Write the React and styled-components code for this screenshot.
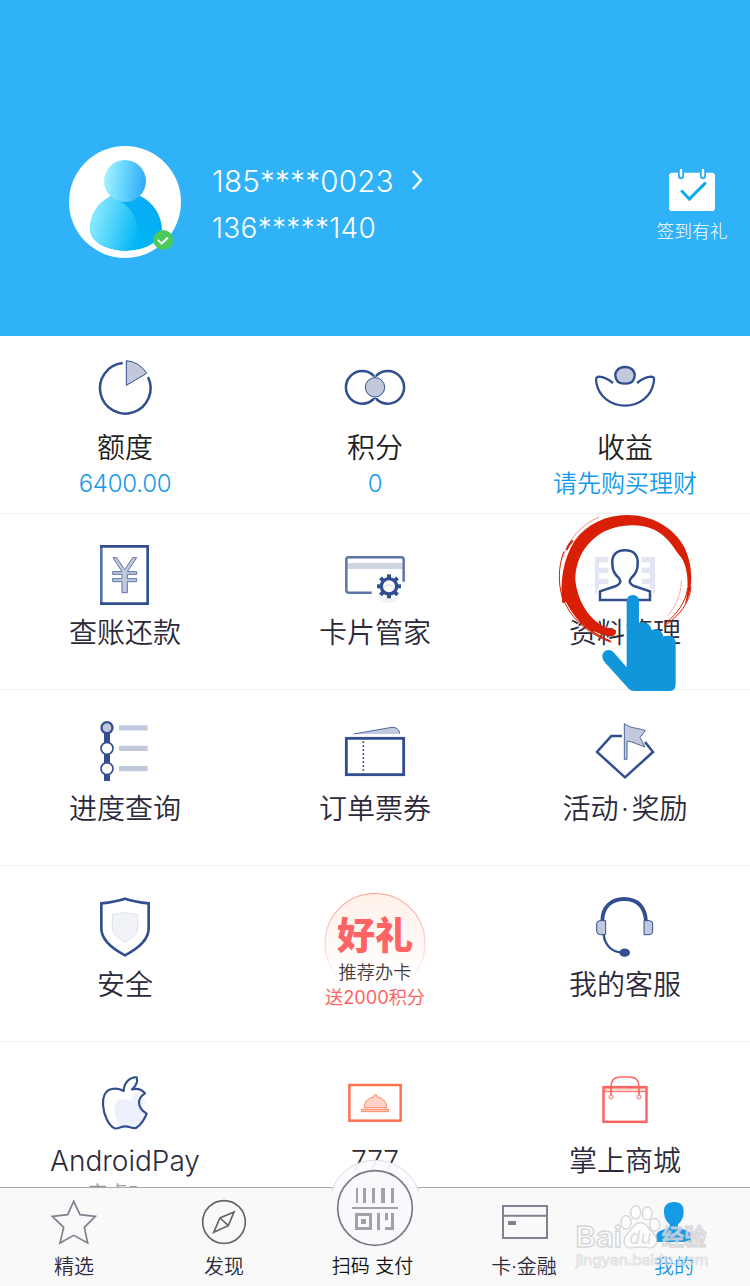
import React from 'react';
import styled, { createGlobalStyle } from 'styled-components';

const NAVY = '#314e8e';
const PALE = '#c3c9dd';
const RED = '#ff6464';
const GREY = '#7f7f8c';

const GlobalStyle = createGlobalStyle`
  * { box-sizing: border-box; }
  body {
    margin: 0;
    background: #fff;
    font-family: Inter, "Noto Sans CJK SC", sans-serif;
    font-weight: 350;
  }
`;

const Screen = styled.div`
  width: 750px;
  height: 1286px;
  display: flex;
  flex-direction: column;
  overflow: hidden;
  background: #fff;
`;

const Header = styled.header`
  height: 336px;
  flex: none;
  display: flex;
  align-items: flex-start;
  padding: 146px 20px 0 69px;
  background: #30b2f8;
  color: #fff;
  font-weight: 300;
`;

const Avatar = styled.svg`
  width: 112px;
  height: 112px;
  flex: none;
`;

const Account = styled.div`
  flex: 1;
  padding: 14px 0 0 31px;
`;

const Phone = styled.div`
  display: flex;
  align-items: center;
  height: ${(p) => (p.$main ? 42 : 40)}px;
  margin-top: ${(p) => (p.$main ? 0 : 6)}px;
  font-size: ${(p) => (p.$main ? 29.5 : 28)}px;
  letter-spacing: ${(p) => (p.$main ? 0.3 : 0.3)}px;
  white-space: nowrap;
`;

const Chevron = styled.svg`
  width: 14px;
  height: 24px;
  margin: -3px 0 0 16px;
`;

const SignIn = styled.div`
  width: 76px;
  padding-top: 20px;
  display: flex;
  flex-direction: column;
  align-items: center;
  font-size: 17.8px;
  line-height: 28px;
  white-space: nowrap;
`;

const CalendarIcon = styled.svg`
  width: 50px;
  height: 52px;
`;

const Content = styled.main`
  height: 851px;
  flex: none;
  overflow: hidden;
`;

const Row = styled.section`
  display: grid;
  grid-template-columns: repeat(3, 250px);
  height: ${(p) => p.$height || 176}px;
  border-bottom: 1px solid #f0f0f2;
`;

const Cell = styled.div`
  position: relative;
  display: flex;
  flex-direction: column;
  align-items: center;
  padding-top: ${(p) => (p.$stat ? 19 : 26)}px;
  color: ${(p) => (p.$stat ? '#1f1f22' : '#2c2a3a')};
`;

const Icon = styled.svg`
  width: 80px;
  height: 72px;
  flex: none;
  display: block;
  fill: none;
`;

const Title = styled.div`
  padding-top: 1px;
  font-size: 28px;
  line-height: 40px;
  white-space: nowrap;
`;

const Dot = styled.span`
  padding: 0 2.5px;
`;

const Value = styled.div`
  font-size: 24px;
  line-height: 32px;
  letter-spacing: ${(p) => (p.$numeric ? '-0.25px' : '0')};
  color: #149bea;
  white-space: nowrap;
`;

const Note = styled.div`
  font-size: 20px;
  line-height: 26px;
  color: #999;
`;

const Promo = styled.div`
  display: grid;
  justify-items: center;
  > * { grid-area: 1 / 1; }
`;

const PromoDisc = styled.svg`
  width: 104px;
  height: 104px;
`;

const PromoText = styled.div`
  display: flex;
  flex-direction: column;
  align-items: center;
  padding-top: 18px;
  white-space: nowrap;
`;

const PromoHead = styled.b`
  font-size: 38px;
  line-height: 50px;
  font-weight: 900;
  color: ${RED};
`;

const PromoLine = styled.span`
  font-size: 18.2px;
  line-height: 25px;
  font-weight: ${(p) => (p.$hot ? 400 : 350)};
  color: ${(p) => (p.$hot ? RED : '#4b3b3f')};
`;

const Pointer = styled.svg`
  position: absolute;
  left: 55px;
  top: -2px;
  width: 140px;
  height: 180px;
  fill: none;
`;

const TabBar = styled.nav`
  position: relative;
  flex: none;
  height: 99px;
  display: grid;
  grid-template-columns: repeat(5, 150px);
  border-top: 1px solid #a9a9ab;
  background: #f9f9f9;
`;

const Tab = styled.div`
  display: flex;
  flex-direction: column;
  align-items: center;
`;

const TabIcon = styled.svg`
  width: 90px;
  height: 65px;
  display: block;
  overflow: visible;
  fill: none;
`;

const TabLabel = styled.div`
  font-size: ${(p) => p.$size || 20}px;
  line-height: 28px;
  padding-right: ${(p) => p.$shift || 2}px;
  color: ${(p) => p.$color || '#2c2a3a'};
  white-space: nowrap;
`;

const Watermark = styled.svg`
  position: absolute;
  left: 570px;
  top: 12px;
  width: 146px;
  height: 75px;
`;

const UserAvatar = () => (
  <Avatar viewBox="57 48 336 336">
    <defs>
      <linearGradient id="head" x1="0" y1=".4" x2="1" y2=".5">
        <stop offset="0" stopColor="#a5f3ff" />
        <stop offset=".5" stopColor="#62d3fd" />
        <stop offset="1" stopColor="#31a8f8" />
      </linearGradient>
      <linearGradient id="bodyFront" x1="0" y1=".3" x2="1" y2=".6">
        <stop offset="0" stopColor="#93eeff" />
        <stop offset="1" stopColor="#06b7f6" />
      </linearGradient>
      <linearGradient id="bodyBack" x1="0" y1="1" x2="1" y2="0">
        <stop offset="0" stopColor="#00bdf8" />
        <stop offset="1" stopColor="#07a9f3" />
      </linearGradient>
    </defs>
    <circle cx="225" cy="216" r="168" fill="#fff" />
    <path d="M182 199C140 220 120 258 120 298C122 338 172 362 227 362C284 362 333 337 336 297C334 258 312 218 271 198Z" fill="url(#bodyBack)" />
    <path d="M182 199C140 220 120 258 120 298C122 338 172 362 227 362C245 362 258 358 263 340C275 290 250 230 205 212Z" fill="url(#bodyFront)" />
    <circle cx="225" cy="153" r="63" fill="url(#head)" />
    <circle cx="340" cy="330" r="30" fill="#4bc95b" />
    <path d="M325 331L335 341L352 324" fill="none" stroke="#fff" strokeWidth="6" strokeLinecap="round" strokeLinejoin="round" />
  </Avatar>
);

const SignInIcon = () => (
  <CalendarIcon viewBox="111 48 150 156">
    <rect x="117" y="68" width="138" height="115" rx="10" fill="#fff" />
    <path d="M153 62V79M219 62V79" stroke="#30b2f8" strokeWidth="18" strokeLinecap="round" />
    <path d="M153 60V78M219 60V78" stroke="#fff" strokeWidth="7" strokeLinecap="round" />
    <path d="M156 124L178 147L225 100" fill="none" stroke="#0fa9ef" strokeWidth="9" strokeLinecap="round" />
  </CalendarIcon>
);

const QuotaIcon = () => (
  <Icon viewBox="105 45 240 216" stroke={NAVY}>
    <path d="M218 69A76 76 0 1 0 294 111" strokeWidth="7.5" />
    <path d="M229 62V136L290 100Q268 65 229 62Z" fill={PALE} strokeWidth="3" />
  </Icon>
);

const PointsIcon = () => (
  <Icon viewBox="855 45 240 216" stroke={NAVY} strokeWidth="7.5">
    <path d="M971 107A49 49 0 1 0 971 177M979 107A49 49 0 1 1 979 177" />
    <path d="M967 106Q975 111 983 106M967 178Q975 173 983 178" strokeWidth="4" />
    <circle cx="975" cy="142" r="29" fill={PALE} strokeWidth="3" />
  </Icon>
);

const IncomeIcon = () => (
  <Icon viewBox="165 45 240 216" stroke={NAVY} strokeWidth="7">
    <path d="M249 129C235 118 222 111 207 110C197 110 198 119 199 128C206 170 243 197 285 197S364 170 371 128C373 118 374 110 363 110C348 111 335 118 321 129" />
    <path d="M260 120C249 100 262 81 285 81S321 100 310 120Q305 131 285 131Q265 131 260 120Z" fill={PALE} />
  </Icon>
);

const BillIcon = () => (
  <Icon viewBox="105 30 240 216" stroke={NAVY}>
    <path d="M154 49V221" stroke="#5b73a7" strokeWidth="8" />
    <path d="M150 49H293V221H150" strokeWidth="8" />
    <path d="M189 83H200L224 119L248 83H260L232 125H260V133H232V146H260V155H232V188H216V155H188V146H216V133H188V125H216Z" fill={PALE} stroke="#5d73a8" strokeWidth="3" />
  </Icon>
);

const CardIcon = () => (
  <Icon viewBox="855 30 240 216">
    <rect x="893" y="99" width="165" height="18" fill="#d0d5e4" />
    <path d="M965 188H896Q889 188 889 181V89Q889 82 896 82H1054Q1061 82 1061 89V155" stroke="#5d74a7" strokeWidth="7.5" />
    <circle cx="1017" cy="186" r="34" fill="#f1f3f8" />
    <circle cx="1017" cy="169" r="38" fill="#fff" />
    <g fill={NAVY}>
      {[0, 45, 90, 135].map((a) => (
        <rect key={a} x="1011" y="133" width="12" height="72" transform={`rotate(${a} 1017 169)`} />
      ))}
    </g>
    <circle cx="1017" cy="169" r="23" fill="#fff" stroke={NAVY} strokeWidth="10" />
    <path d="M1000 175A18 18 0 0 1 1034 175Q1017 160 1000 175Z" fill="#e1e5f0" />
  </Icon>
);

const ProfileIcon = () => (
  <Icon viewBox="165 600 240 216">
    <path d="M195 651H235V667H207V683H235V699H207V716H235V732H207V757L195 761ZM375 651H335V667H359V683H335V699H359V716H335V732H359V757L375 763Z" fill="#e2e6f2" />
    <path d="M210 780V754L258 738C270 733 274 724 268 716C252 700 247 690 247 672C245 645 258 631 285 631S325 645 323 672C323 690 318 700 302 716C296 724 300 733 312 738L360 754V780Z" fill="#fff" stroke="#fff" strokeWidth="18" />
    <path d="M210 780V754L258 738C270 733 274 724 268 716C252 700 247 690 247 672C245 645 258 631 285 631S325 645 323 672C323 690 318 700 302 716C296 724 300 733 312 738L360 754V780Z" fill="#fff" stroke={NAVY} strokeWidth="7.5" />
  </Icon>
);

const ProgressIcon = () => (
  <Icon viewBox="105 33 240 216">
    <path d="M171 68V228" stroke={NAVY} strokeWidth="18" />
    <path d="M207 68.500H293M207 130H293M207 191H293" stroke={PALE} strokeWidth="16" />
    <circle cx="171" cy="68" r="16.500" fill={PALE} stroke={NAVY} strokeWidth="7" />
    <circle cx="171" cy="130" r="18" fill="#fff" stroke={NAVY} strokeWidth="5" />
    <circle cx="171" cy="191" r="18" fill="#fff" stroke={NAVY} strokeWidth="5" />
  </Icon>
);

const TicketIcon = () => (
  <Icon viewBox="855 33 240 216" stroke={NAVY}>
    <path d="M915 87L1025 67Q1047 66 1049 87Z" fill={PALE} stroke="none" />
    <path d="M911 87L1025 67Q1047 66 1049 86" strokeWidth="2.500" />
    <rect x="889" y="100" width="172" height="109" strokeWidth="8.500" />
    <path d="M940 109V206" strokeWidth="5" strokeDasharray="5 7" />
  </Icon>
);

const RewardIcon = () => (
  <Icon viewBox="165 33 240 216" stroke={NAVY}>
    <path d="M276 93H244L201 141L285 217L369 141L345 111" strokeWidth="7.500" />
    <path d="M283 56C305 72 325 68 346 77L330 97L345 126C325 120 310 110 291 108V163H283Z" fill={PALE} strokeWidth="2.500" />
  </Icon>
);

const ShieldIcon = () => (
  <Icon viewBox="105 36 240 216">
    <path d="M154 70Q195 66 225 56Q255 66 296 70V145C296 183 260 208 225 226C190 208 154 183 154 145Z" stroke={NAVY} strokeWidth="8" />
    <path d="M187 103Q209 102 225 97Q241 102 263 103V143C263 164 243 177 225 186C207 177 187 164 187 143Z" fill="#f2f3f8" stroke="#d9dde9" strokeWidth="2.500" />
  </Icon>
);

const HeadsetIcon = () => (
  <Icon viewBox="165 36 240 216" stroke={NAVY}>
    <path d="M217 122C217 80 245 57 283 57S348 80 348 130" strokeWidth="11.500" />
    <path d="M221 163C224 195 245 216 275 217" strokeWidth="7" />
    <path d="M227 122H210Q200 122 200 132V153Q200 164 211 164H227ZM342 122H358Q368 122 368 132V153Q368 164 358 164H342Z" fill={PALE} strokeWidth="3" />
    <ellipse cx="284" cy="218" rx="16" ry="12.500" fill={NAVY} stroke="none" />
  </Icon>
);

const AppleIcon = () => (
  <Icon viewBox="165 24 240 216">
    <path d="M303 119C306 103 318 97 330 95C329 108 318 120 303 119ZM286 119C266 112 252 126 254 153C256 182 272 205 286 203C300 200 308 207 318 203C334 198 347 182 352 162C335 152 330 136 350 126C338 112 318 116 303 121Z" fill="#edf1fb" />
    <path d="M320 52C302 50 282 66 281 93C270 86 258 84 245 87C225 91 217 112 219 135C221 165 236 198 254 205C264 208 272 199 286 199C300 199 308 207 318 204C332 196 345 175 350 161C335 152 326 143 327 125C328 113 336 106 345 100C337 90 322 84 306 88C318 78 324 66 320 52Z" stroke={NAVY} strokeWidth="6.500" strokeLinejoin="round" />
  </Icon>
);

const DishIcon = () => (
  <Icon viewBox="915 24 240 216" stroke="#ff7150">
    <rect x="958" y="75" width="154" height="107" strokeWidth="7.500" />
    <path d="M1003 143C1003 122 1018 113 1031 111V107Q1036 99 1041 107V111C1055 113 1070 122 1070 143ZM994 148H1076V155H994Z" fill="#ffd2c5" strokeWidth="2.500" />
  </Icon>
);

const BagIcon = () => (
  <Icon viewBox="165 564 240 216" stroke={RED}>
    <rect x="223" y="624" width="124" height="11" fill="#ffd5c9" stroke="none" />
    <rect x="220.500" y="621.500" width="129" height="104" strokeWidth="7.500" />
    <path d="M220 635H350" strokeWidth="3" />
    <path d="M243 645V620Q243 592 270 591H300Q327 592 327 620V645" strokeWidth="5" />
    <circle cx="243" cy="651" r="6" fill="#fff" strokeWidth="3" />
    <circle cx="327" cy="651" r="6" fill="#fff" strokeWidth="3" />
  </Icon>
);

const GiftPromo = () => (
  <Promo>
    <PromoDisc viewBox="0 0 104 104">
      <defs>
        <linearGradient id="discFill" x1="0" y1="0" x2="0" y2="1">
          <stop offset="0" stopColor="#fff1e9" />
          <stop offset=".85" stopColor="#fff" />
        </linearGradient>
        <linearGradient id="discLine" x1="0" y1="0" x2="0" y2="1">
          <stop offset="0" stopColor="#ff9c9c" />
          <stop offset=".9" stopColor="#fff" />
        </linearGradient>
      </defs>
      <circle cx="52" cy="51.500" r="50" fill="url(#discFill)" stroke="url(#discLine)" strokeWidth="1.200" />
    </PromoDisc>
    <PromoText>
      <PromoHead>好礼</PromoHead>
      <PromoLine>推荐办卡</PromoLine>
      <PromoLine $hot>送2000积分</PromoLine>
    </PromoText>
  </Promo>
);

const TapPointer = () => (
  <Pointer viewBox="75 516 420 540">
    <g fill="#d92006">
      <path d="M243 889C195 885 140 848 108 786L97 790C90 730 97 660 134 602C170 552 228 526 290 525C362 524 430 560 463 622C489 675 492 748 464 796C478 748 476 684 453 652C430 624 418 592 373 569C330 550 270 552 224 574C165 606 136 660 136 720C142 780 175 838 225 861L252 868C263 872 259 888 243 889Z" />
    </g>
    <g stroke="#d92006" strokeLinecap="round">
      <path d="M206 532C155 553 113 598 98 655" strokeWidth="1.500" />
      <path d="M127 603Q113 618 111 628" strokeWidth="6" />
      <path d="M101 636C83 680 83 750 105 790C132 845 180 884 243 907" strokeWidth="3" />
      <path d="M112 786C140 845 180 878 240 903" strokeWidth="5" strokeDasharray="60 5 25 3" />
      <path d="M483 740C480 785 450 828 403 857" strokeWidth="3" />
      <path d="M473 745C467 787 440 823 408 849" strokeWidth="3" />
      <path d="M454 722C454 765 435 802 413 827" strokeWidth="1.200" strokeDasharray="18 5" />
      <path d="M163 650C180 604 225 570 262 563" stroke="#fff" strokeWidth="1.500" />
    </g>
    <path d="M290 982V784Q291 765 308 765Q326 765 327 784V848Q360 842 364 870Q394 860 401 890Q434 880 437 908V1034Q436 1053 418 1053H313Q303 1053 296 1046L223 965C211 950 218 930 237 930Q246 931 252 938Z" fill="#1296db" />
  </Pointer>
);

const StarIcon = () => (
  <TabIcon viewBox="0 384 270 195">
    <path d="M131 424L150 464L196 469L163 502L173 549L131 526L90 549L101 502L67 469L113 464Z" stroke={GREY} strokeWidth="5" />
  </TabIcon>
);

const CompassIcon = () => (
  <TabIcon viewBox="450 384 270 195" stroke="#666">
    <circle cx="582" cy="486" r="64" strokeWidth="5" />
    <path d="M612 456L570 474L551 517L595 497ZM570 474L595 497" strokeWidth="5" />
  </TabIcon>
);

const ScanIcon = () => (
  <TabIcon viewBox="900 384 270 195">
    <path d="M905 395C922 338 975 301 1035 301S1148 338 1166 395Z" fill="#fbfbfe" fillOpacity=".93" />
    <path d="M905 395C922 338 975 301 1035 301S1148 338 1166 395" stroke="#dadadd" strokeWidth="3" />
    <circle cx="1035" cy="444" r="112" fill="#f9f9fb" stroke="#7b7987" strokeWidth="5" />
    <path d="M978 384H984V429H978ZM999 384H1008V429H999ZM1026 384H1035V429H1026ZM1053 384H1065V429H1053ZM1083 384H1092V429H1083ZM966 441H1104V447H966ZM975 459H1026V510H975ZM1041 459H1050V510H1041ZM1065 459H1074V481H1065ZM1083 459H1092V510H1065V501H1083Z" fill="#a1a1a8" />
    <rect x="984" y="468" width="33" height="33" fill="#f9f9fb" />
    <rect x="993" y="477" width="15" height="15" fill="#a1a1a8" />
  </TabIcon>
);

const FinanceIcon = () => (
  <TabIcon viewBox="90 54 270 195">
    <path d="M159 108H291V204H159ZM159 137H291" stroke="#85808f" strokeWidth="6" />
    <rect x="174" y="153" width="24" height="12" fill="#85808f" />
  </TabIcon>
);

const MeIcon = () => (
  <TabIcon viewBox="540 54 270 195">
    <path d="M672 96C692 96 703 108 701 128C700 144 693 156 684 163V171Q686 174 700 178C718 183 724 188 724 201V216H619V201C619 188 626 183 643 178Q657 174 659 171V163C650 156 643 144 642 128C640 108 652 96 672 96Z" fill="#159ae8" />
  </TabIcon>
);

const SiteWatermark = () => (
  <Watermark viewBox="360 90 438 225">
    <g fill="#fff" fillOpacity=".6" stroke="#c9c9cc" strokeOpacity=".75" strokeWidth="4" fontFamily="Inter, 'Noto Sans CJK SC', sans-serif" fontWeight="600">
      <ellipse cx="528" cy="157" rx="15" ry="20" />
      <ellipse cx="557" cy="127" rx="15" ry="20" />
      <ellipse cx="592" cy="130" rx="15" ry="19" />
      <ellipse cx="614" cy="164" rx="15" ry="19" />
      <path d="M571 158C589 158 596 177 611 191C630 211 617 238 592 233Q571 228 550 233C525 238 514 213 530 194C546 179 552 158 571 158Z" />
      <text x="376" y="231" fontSize="86" textLength="140" lengthAdjust="spacingAndGlyphs">Bai</text>
      <text x="538" y="222" fontSize="58" fill="#ccc" stroke="none" fontStyle="italic" fontWeight="500" textLength="66" lengthAdjust="spacingAndGlyphs">du</text>
      <text x="635" y="226" fontSize="67" fontWeight="500">经验</text>
      <text x="377" y="284" fontSize="43" fontWeight="400" strokeWidth="3" strokeOpacity=".5" textLength="398" lengthAdjust="spacingAndGlyphs">jingyan.baidu.com</text>
    </g>
  </Watermark>
);

const stats = [
  { icon: QuotaIcon, title: '额度', value: '6400.00', numeric: true },
  { icon: PointsIcon, title: '积分', value: '0', numeric: true },
  { icon: IncomeIcon, title: '收益', value: '请先购买理财' },
];

const rows = [
  [
    { icon: BillIcon, title: '查账还款' },
    { icon: CardIcon, title: '卡片管家' },
    { icon: ProfileIcon, title: '资料管理', pointed: true },
  ],
  [
    { icon: ProgressIcon, title: '进度查询' },
    { icon: TicketIcon, title: '订单票券' },
    { icon: RewardIcon, title: <>活动<Dot>·</Dot>奖励</> },
  ],
  [
    { icon: ShieldIcon, title: '安全' },
    { promo: true },
    { icon: HeadsetIcon, title: '我的客服' },
  ],
  [
    { icon: AppleIcon, title: 'AndroidPay', note: '安卓Pay' },
    { icon: DishIcon, title: '777' },
    { icon: BagIcon, title: '掌上商城' },
  ],
];

const tabs = [
  { icon: StarIcon, label: '精选' },
  { icon: CompassIcon, label: '发现' },
  { icon: ScanIcon, label: '扫码 支付', size: 19, shift: 5, color: '#111' },
  { icon: FinanceIcon, label: '卡·金融' },
  { icon: MeIcon, label: '我的', color: '#159ae8' },
];

export default function App() {
  return (
    <Screen>
      <GlobalStyle />
      <Header>
        <UserAvatar />
        <Account>
          <Phone $main>
            185****0023
            <Chevron viewBox="0 0 14 24">
              <path d="M3 3L11 12L3 21" fill="none" stroke="#fff" strokeWidth="2.400" />
            </Chevron>
          </Phone>
          <Phone>136*****140</Phone>
        </Account>
        <SignIn>
          <SignInIcon />
          签到有礼
        </SignIn>
      </Header>
      <Content>
        <Row $height={178}>
          {stats.map(({ icon: Glyph, title, value, numeric }) => (
            <Cell $stat key={title}>
              <Glyph />
              <Title>{title}</Title>
              <Value $numeric={numeric}>{value}</Value>
            </Cell>
          ))}
        </Row>
        {rows.map((cells, r) => (
          <Row key={r}>
            {cells.map(({ icon: Glyph, title, note, promo, pointed }, c) => (
              <Cell key={c}>
                {promo ? <GiftPromo /> : <Glyph />}
                {title && <Title>{title}</Title>}
                {note && <Note>{note}</Note>}
                {pointed && <TapPointer />}
              </Cell>
            ))}
          </Row>
        ))}
      </Content>
      <TabBar>
        {tabs.map(({ icon: Glyph, label, size, shift, color }) => (
          <Tab key={label}>
            <Glyph />
            <TabLabel $size={size} $shift={shift} $color={color}>{label}</TabLabel>
          </Tab>
        ))}
        <SiteWatermark />
      </TabBar>
    </Screen>
  );
}
